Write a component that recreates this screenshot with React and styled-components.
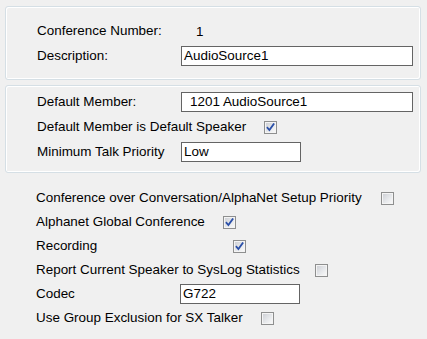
import React from "react";
import styled, { createGlobalStyle } from "styled-components";

const Global = createGlobalStyle`
  html, body { margin: 0; padding: 0; background: #f0f0f0; }
  body { font-family: "Liberation Sans", Arial, sans-serif; font-size: 13.45px; color: #000; }
`;

const Page = styled.div`
  width: 427px;
  height: 339px;
  box-sizing: border-box;
  padding: 6px 6px 0 5px;
  display: flex;
  flex-direction: column;
`;

const Group = styled.div`
  border: 1px solid #d5dfe5;
  border-radius: 3px;
  box-shadow: inset 1px 1px 0 #fff, inset -1px -1px 0 #fff;
  padding: ${(p) => p.$pad};
  margin-bottom: ${(p) => p.$mb || 0}px;
  display: flex;
  flex-direction: column;
  gap: 5px;
`;

const Plain = styled.div`
  display: flex;
  flex-direction: column;
  gap: 4px;
  padding-top: ${(p) => p.$pt}px;
`;

const Row = styled.div`
  height: 20px;
  display: flex;
  align-items: center;
  padding-left: 31px;
`;

const Label = styled.span`
  flex: none;
  width: ${(p) => p.$w}px;
  white-space: nowrap;
  line-height: 20px;
`;

const Value = styled.span`
  padding-left: 15px;
`;

const Input = styled.div`
  box-sizing: border-box;
  width: ${(p) => p.$w}px;
  height: 20px;
  border: 1px solid #646464;
  background: #fff;
  padding-left: ${(p) => p.$pl || 2}px;
  line-height: 18px;
  white-space: nowrap;
  overflow: hidden;
`;

const Box = styled.span`
  box-sizing: border-box;
  width: 13px;
  height: 13px;
  border: 1px solid #8e8f8f;
  padding: 1px;
  background: #f4f4f4;
  display: inline-flex;
`;

const BoxInner = styled.span`
  flex: 1;
  background: linear-gradient(135deg, #cfd1d6 0%, #e6e8eb 55%, #f8f8f8 100%);
  display: flex;
  align-items: center;
  justify-content: center;
`;

function Check({ checked }) {
  return (
    <Box>
      <BoxInner>
        {checked && (
          <svg width="9" height="9" viewBox="0 0 9 9">
            <path d="M1.5 4.8 L3.4 7 L7.6 1.2" fill="none" stroke="#2a4fa8" strokeWidth="1.8" strokeLinecap="square" />
          </svg>
        )}
      </BoxInner>
    </Box>
  );
}

const bottomRows = [
  { text: "Conference over Conversation/AlphaNet Setup Priority", x: 382, checked: false },
  { text: "Alphanet Global Conference", x: 224, checked: true },
  { text: "Recording", x: 234, checked: true },
  { text: "Report Current Speaker to SysLog Statistics", x: 316, checked: false },
  { text: "Codec", input: "G722" },
  { text: "Use Group Exclusion for SX Talker", x: 262, checked: false },
];

export default function App() {
  return (
    <>
      <Global />
      <Page>
        <Group $pad="14px 0 13px 0" $mb={5}>
          <Row>
            <Label $w={144}>Conference Number:</Label>
            <Value>1</Value>
          </Row>
          <Row>
            <Label $w={144}>Description:</Label>
            <Input $w={232}>AudioSource1</Input>
          </Row>
        </Group>
        <Group $pad="6px 0 10px 0">
          <Row>
            <Label $w={144}>Default Member:</Label>
            <Input $w={232} $pl={8}>1201 AudioSource1</Input>
          </Row>
          <Row>
            <Label $w={227}>Default Member is Default Speaker</Label>
            <Check checked />
          </Row>
          <Row>
            <Label $w={144}>Minimum Talk Priority</Label>
            <Input $w={120}>Low</Input>
          </Row>
        </Group>
        <Plain $pt={15}>
          {bottomRows.map((r) => (
            <Row key={r.text}>
              <Label $w={r.input ? 144 : r.x - 37}>{r.text}</Label>
              {r.input ? <Input $w={120}>{r.input}</Input> : <Check checked={r.checked} />}
            </Row>
          ))}
        </Plain>
      </Page>
    </>
  );
}
